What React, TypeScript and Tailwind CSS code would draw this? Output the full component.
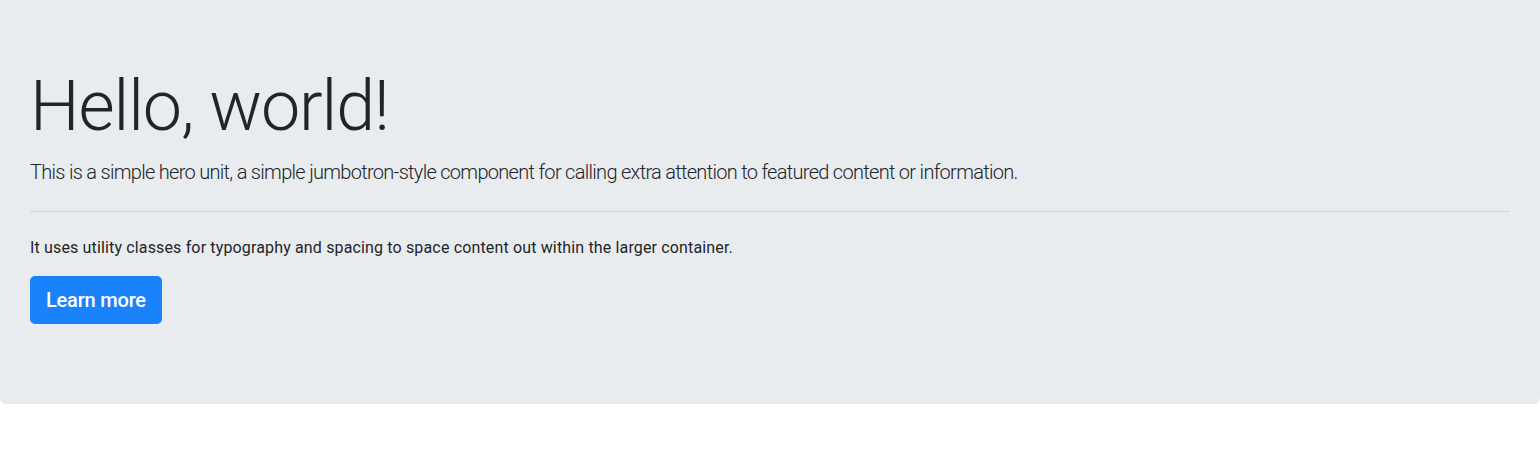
import React from 'react';

const App: React.FC = () => {
  return (
    <div className="min-h-screen bg-white" style={{ fontFamily: 'Roboto, "Noto Sans", sans-serif' }}>
      <div className="bg-[#e9ecef] rounded-b-md px-[30px] pt-[64px] pb-[80px] text-[#212529]">
        <h1 className="text-[70px] font-light leading-[1.2] tracking-[-1.1px]">Hello, world!</h1>
        <p className="mt-[9px] text-[20px] font-light leading-[30px] tracking-[-0.7px]">
          This is a simple hero unit, a simple jumbotron-style component for calling extra attention to featured content or information.
        </p>
        <hr className="my-[24px] border-0 border-t border-black/10" />
        <p className="text-base leading-6 tracking-[0.15px]">
          It uses utility classes for typography and spacing to space content out within the larger container.
        </p>
        <button className="mt-4 rounded-[5px] bg-[#1a82fb] px-4 py-2 text-[20px] font-medium leading-[32px] tracking-[-0.2px] text-white">
          Learn more
        </button>
      </div>
    </div>
  );
};

export default App;
